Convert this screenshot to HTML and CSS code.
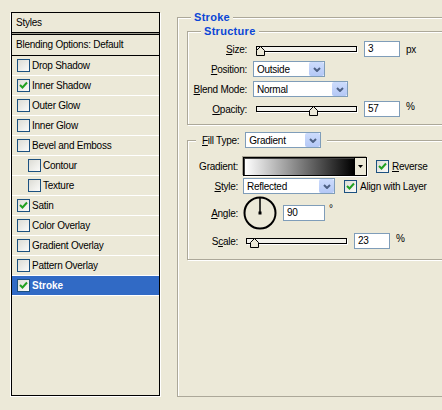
FILE: index.html
```html
<!DOCTYPE html>
<html lang="en">
<head>
    <meta charset="UTF-8">
    <title>Layer Style - Stroke</title>
    <link rel="stylesheet" href="styles.css">
</head>
<body>

<div class="dialog">
    <div class="style-list">
        <div class="list-head">Styles</div>
        <div class="list-blend">Blending Options: Default</div>
        <div class="item"><span class="check"></span>Drop Shadow</div>
        <div class="item"><span class="check"><svg width="9" height="9" viewBox="0 0 9 9"><polyline points="1,4 3.5,6.5 8,1.5"/></svg></span>Inner Shadow</div>
        <div class="item"><span class="check"></span>Outer Glow</div>
        <div class="item"><span class="check"></span>Inner Glow</div>
        <div class="item"><span class="check"></span>Bevel and Emboss</div>
        <div class="item sub"><span class="check"></span>Contour</div>
        <div class="item sub"><span class="check"></span>Texture</div>
        <div class="item"><span class="check"><svg width="9" height="9" viewBox="0 0 9 9"><polyline points="1,4 3.5,6.5 8,1.5"/></svg></span>Satin</div>
        <div class="item"><span class="check"></span>Color Overlay</div>
        <div class="item"><span class="check"></span>Gradient Overlay</div>
        <div class="item"><span class="check"></span>Pattern Overlay</div>
        <div class="item selected"><span class="check"><svg width="9" height="9" viewBox="0 0 9 9"><polyline points="1,4 3.5,6.5 8,1.5"/></svg></span>Stroke</div>
    </div>

    <fieldset class="group stroke-group">
        <legend class="title">Stroke</legend>
        <div class="stroke-body">

            <fieldset class="group">
                <legend class="title">Structure</legend>
                <div class="rows">
                    <div class="row">
                        <span class="lbl"><u>S</u>ize:</span>
                        <div class="slider">
                            <div class="track"></div>
                            <svg class="thumb" style="left: 0px" width="9" height="10" viewBox="0 0 9 10"><polygon points="0.5,9.5 0.5,4.5 4.5,0.5 8.5,4.5 8.5,9.5"/></svg>
                        </div>
                        <span class="num">3</span>
                        <span class="unit">px</span>
                    </div>
                    <div class="row">
                        <span class="lbl"><u>P</u>osition:</span>
                        <div class="select sel-position">
                            <span class="value">Outside</span>
                            <span class="drop"><svg width="8" height="5" viewBox="0 0 8 5"><polyline points="1,1 4,4 7,1"/></svg></span>
                        </div>
                    </div>
                    <div class="row">
                        <span class="lbl"><u>B</u>lend Mode:</span>
                        <div class="select sel-blend">
                            <span class="value">Normal</span>
                            <span class="drop"><svg width="8" height="5" viewBox="0 0 8 5"><polyline points="1,1 4,4 7,1"/></svg></span>
                        </div>
                    </div>
                    <div class="row">
                        <span class="lbl"><u>O</u>pacity:</span>
                        <div class="slider">
                            <div class="track"></div>
                            <svg class="thumb" style="left: 53px" width="9" height="10" viewBox="0 0 9 10"><polygon points="0.5,9.5 0.5,4.5 4.5,0.5 8.5,4.5 8.5,9.5"/></svg>
                        </div>
                        <span class="num">57</span>
                        <span class="unit raised">%</span>
                    </div>
                </div>
            </fieldset>

            <fieldset class="group fill-group">
                <legend class="fill-legend">
                    <span><u>F</u>ill Type:</span>
                    <div class="select sel-fill">
                        <span class="value">Gradient</span>
                        <span class="drop"><svg width="8" height="5" viewBox="0 0 8 5"><polyline points="1,1 4,4 7,1"/></svg></span>
                    </div>
                </legend>
                <div class="fill-rows">
                    <div class="row row-gradient">
                        <span class="lbl">Gradient:</span>
                        <div class="gradient">
                            <span class="ramp"></span>
                            <span class="arrow"><svg width="5" height="3" viewBox="0 0 5 3"><polygon points="0,0 5,0 2.5,3"/></svg></span>
                        </div>
                        <span class="check boxed"><svg width="9" height="9" viewBox="0 0 9 9"><polyline points="1,4 3.5,6.5 8,1.5"/></svg></span>
                        <span class="check-text"><u>R</u>everse</span>
                    </div>
                    <div class="row row-style">
                        <span class="lbl"><u>S</u>tyle:</span>
                        <div class="select sel-style">
                            <span class="value">Reflected</span>
                            <span class="drop"><svg width="8" height="5" viewBox="0 0 8 5"><polyline points="1,1 4,4 7,1"/></svg></span>
                        </div>
                        <span class="check boxed"><svg width="9" height="9" viewBox="0 0 9 9"><polyline points="1,4 3.5,6.5 8,1.5"/></svg></span>
                        <span class="check-text">Align with Layer</span>
                    </div>
                    <div class="row row-angle">
                        <span class="lbl"><u>A</u>ngle:</span>
                        <svg class="dial" width="34" height="34" viewBox="0 0 34 34">
                            <circle cx="17" cy="17" r="15.5"/>
                            <line x1="17" y1="17" x2="17" y2="2"/>
                            <rect x="15.5" y="15.5" width="3" height="3"/>
                        </svg>
                        <span class="num wide">90</span>
                        <span class="unit deg">°</span>
                    </div>
                    <div class="row row-scale">
                        <span class="lbl">S<u>c</u>ale:</span>
                        <div class="slider">
                            <div class="track"></div>
                            <svg class="thumb" style="left: 4px" width="9" height="10" viewBox="0 0 9 10"><polygon points="0.5,9.5 0.5,4.5 4.5,0.5 8.5,4.5 8.5,9.5"/></svg>
                        </div>
                        <span class="num">23</span>
                        <span class="unit raised">%</span>
                    </div>
                </div>
            </fieldset>

        </div>
    </fieldset>
</div>

</body>
</html>
```

FILE: styles.css
```css
body {
    margin: 0;
    background-color: #ece9d8;
    font-family: "Liberation Sans", Arial, sans-serif;
    font-size: 10px;
    letter-spacing: -0.25px;
    color: #000;
    overflow: hidden;
}

.dialog {
    display: flex;
    align-items: flex-start;
    padding-left: 11px;
    width: 640px;
}

/* left: list of effects */

.style-list {
    flex-shrink: 0;
    width: 149px;
    height: 384px;
    box-sizing: border-box;
    margin-top: 12px;
    border: 1px solid #000;
    box-shadow: 1px 1px 0 #fff, -1px 1px 0 #fff;
}

.list-head {
    height: 19px;
    line-height: 19px;
    padding-left: 4px;
    border-bottom: 1px solid #000;
    box-shadow: 0 1px 0 #9c9a8c;
}

.list-blend {
    height: 20px;
    line-height: 20px;
    padding-left: 4px;
    margin-top: 1px;
    border-top: 1px solid #000;
    border-bottom: 1px solid #000;
}

.item {
    display: flex;
    align-items: center;
    height: 19px;
    padding-left: 5px;
    border-bottom: 1px solid #fff;
}

.item.sub {
    padding-left: 16px;
}

.item.selected {
    background-color: #316ac5;
    color: #fff;
    font-weight: bold;
    letter-spacing: 0;
}

.check {
    display: flex;
    align-items: center;
    justify-content: center;
    flex-shrink: 0;
    width: 13px;
    height: 13px;
    box-sizing: border-box;
    margin-right: 2px;
    border: 1px solid #1c5180;
    background: linear-gradient(135deg, #dcdcd5, #fbfbf9);
}

.check polyline {
    fill: none;
    stroke: #21a121;
    stroke-width: 2;
}

/* right: group boxes */

.group {
    margin: 0;
    padding: 0;
    min-width: 0;
    border: 1px solid #aca899;
    box-shadow: inset 1px 1px 0 #fff, 1px 1px 0 #fff;
}

.title {
    margin-left: 13px;
    padding: 0 3px;
    font-size: 11px;
    font-weight: bold;
    line-height: 14px;
    letter-spacing: 0.3px;
    color: #0a46d6;
    background-color: #ece9d8;
}

.stroke-group {
    flex-shrink: 0;
    width: 320px;
    height: 387px;
    box-sizing: border-box;
    margin-left: 17px;
    margin-top: 10px;
}

.stroke-body {
    padding-left: 9px;
}

.rows {
    display: flex;
    flex-direction: column;
    gap: 4px;
    padding: 3px 0 7px;
}

.row {
    display: flex;
    align-items: center;
    height: 16px;
}

.lbl {
    flex-shrink: 0;
    width: 59px;
    margin-right: 6px;
    text-align: right;
}

.slider {
    position: relative;
    flex-shrink: 0;
    width: 101px;
    height: 16px;
    margin-left: 3px;
    padding-top: 5px;
    box-sizing: border-box;
}

.track {
    height: 6px;
    box-sizing: border-box;
    border: 1px solid #000;
    background-color: #f3f2ec;
    box-shadow: 1px 1px 0 #fff;
}

.thumb {
    position: absolute;
    top: 5px;
}

.thumb polygon {
    fill: #ece9d8;
    stroke: #000;
}

.num {
    flex-shrink: 0;
    width: 36px;
    height: 16px;
    box-sizing: border-box;
    margin-left: 7px;
    padding-left: 3px;
    line-height: 14px;
    border: 1px solid #7f9db9;
    background-color: #fff;
}

.num.wide {
    width: 42px;
    margin-left: 6px;
}

.unit {
    margin-left: 6px;
}

.unit.raised {
    align-self: flex-start;
    line-height: 12px;
}

.unit.deg {
    margin-left: 4px;
    margin-top: -10px;
}

.select {
    display: flex;
    align-items: center;
    flex-shrink: 0;
    height: 16px;
    box-sizing: border-box;
    padding-left: 3px;
    border: 1px solid #7f9db9;
    background-color: #fff;
}

.select .value {
    flex: 1;
}

.drop {
    display: flex;
    align-items: center;
    justify-content: center;
    width: 15px;
    height: 14px;
    border-radius: 2px;
    background: linear-gradient(#cddcfc, #b4c8f6);
}

.drop polyline {
    fill: none;
    stroke: #4d6185;
    stroke-width: 2;
}

.sel-position {
    width: 72px;
}

.sel-blend {
    width: 95px;
}

.sel-fill {
    width: 76px;
}

.sel-style {
    width: 92px;
}

/* fill type box */

.fill-group {
    margin-top: 7px;
}

.fill-legend {
    display: flex;
    align-items: center;
    gap: 6px;
    margin-left: 8px;
    padding: 0 6px;
    background-color: #ece9d8;
}

.fill-rows {
    padding: 9px 0 10px;
}

.fill-rows .lbl {
    width: 50px;
    margin-right: 5px;
}

.row-gradient {
    height: 19px;
}

.row-style {
    margin-top: 2px;
}

.row-angle {
    height: 34px;
    margin-top: 2px;
}

.row-scale {
    margin-top: 3px;
}

.gradient {
    display: flex;
    flex-shrink: 0;
    width: 124px;
    height: 19px;
    box-sizing: border-box;
    border: 1px solid #000;
    box-shadow: -1px -1px 0 #aca899, 1px 1px 0 #fff;
}

.ramp {
    flex: 1;
    border-top: 1px solid #404040;
    border-left: 1px solid #404040;
    background: linear-gradient(to right, #fff, #000);
}

.arrow {
    display: flex;
    align-items: center;
    justify-content: center;
    width: 11px;
    border-left: 1px solid #000;
    background-color: #ece9d8;
}

.check.boxed {
    margin-left: 9px;
    margin-right: 3px;
}

.dial circle {
    fill: none;
    stroke: #000;
    stroke-width: 2;
}

.dial line {
    stroke: #000;
    stroke-width: 1.5;
}
```
